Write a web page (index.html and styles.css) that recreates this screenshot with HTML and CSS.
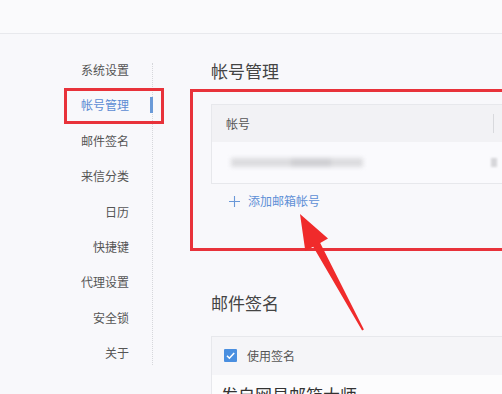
FILE: index.html
```html
<!DOCTYPE html>
<html lang="zh-CN">
<head>
    <meta charset="UTF-8">
    <meta name="viewport" content="width=device-width, initial-scale=1.0">
    <title>设置</title>
    <link rel="stylesheet" href="styles.css">
</head>
<body>

<div class="topbar"></div>

<div class="page">
    <div class="side">
        <ul class="nav">
            <li>系统设置</li>
            <li class="active">帐号管理</li>
            <li>邮件签名</li>
            <li>来信分类</li>
            <li>日历</li>
            <li>快捷键</li>
            <li>代理设置</li>
            <li>安全锁</li>
            <li>关于</li>
        </ul>
    </div>

    <div class="main">
        <h2>帐号管理</h2>
        <div class="acc-table">
            <div class="acc-head">
                <span>帐号</span>
                <i class="col-sep"></i>
            </div>
            <div class="acc-row">
                <span class="blur-mail"><b class="b1"></b><b class="b2"></b><b class="b3"></b></span>
                <span class="blur-col"></span>
            </div>
        </div>
        <a class="add-link" href="#">
            <svg class="plus" width="11" height="11" viewBox="0 0 11 11"><path d="M5.5 0v11M0 5.5h11" stroke="#6a98d8" stroke-width="1.1"/></svg>添加邮箱帐号</a>

        <h2 class="sig-title">邮件签名</h2>
        <div class="sig-box">
            <div class="sig-head">
                <span class="check"><svg width="13" height="13" viewBox="0 0 13 13"><path d="M3 6.8l2.4 2.4L10.2 4" fill="none" stroke="#fff" stroke-width="1.6"/></svg></span>
                <span>使用签名</span>
            </div>
            <div class="sig-text">发自网易邮箱大师</div>
        </div>
    </div>
</div>

<!-- 标注 -->
<div class="mark mark-nav"></div>
<div class="mark mark-acc"></div>
<svg class="arrow" width="502" height="394" viewBox="0 0 502 394">
    <polygon points="300,214 328,238.6 320.2,243 363.9,329.5 362.1,330.5 313.2,246.7 305.3,251" fill="#f02b2b"/>
</svg>

</body>
</html>
```

FILE: styles.css
```css
* {
    box-sizing: border-box;
}
body {
    margin: 0;
    height: 394px;
    overflow: hidden;
    font-family: "Noto Sans CJK SC", "Noto Sans", sans-serif;
    background-color: #f8f8fb;
    color: #555;
    position: relative;
}
.topbar {
    height: 34px;
    background-color: #fafafc;
    border-bottom: 1px solid #e8e9ed;
}
.page {
    display: flex;
}
.side {
    width: 153px;
    flex-shrink: 0;
    padding-top: 29px;
}
.nav {
    list-style: none;
    margin: 0;
    padding: 0 0 5px 0;
    border-right: 1px dotted #d6d7db;
    display: flex;
    flex-direction: column;
    gap: 21.4px;
}
.nav li {
    position: relative;
    font-size: 12px;
    line-height: 14px;
    text-align: right;
    padding-right: 23px;
    color: #555;
}
.nav li.active {
    color: #5b8bd3;
}
.nav li.active::after {
    content: "";
    position: absolute;
    right: -1px;
    top: -1px;
    width: 3px;
    height: 16px;
    background-color: #6a9ad8;
}
.main {
    padding: 25px 0 0 58px;
    flex: 1;
    min-width: 0;
}
h2 {
    margin: 0;
    font-size: 17px;
    line-height: 24px;
    font-weight: normal;
    color: #444;
}
.acc-table {
    margin-top: 21px;
    width: 320px;
    border: 1px solid #e7e8ec;
    background-color: #fafafd;
}
.acc-head {
    height: 37px;
    background-color: #f2f2f5;
    display: flex;
    align-items: center;
    padding-left: 14px;
    font-size: 12px;
    color: #555;
}
.col-sep {
    margin-left: auto;
    margin-right: 36px;
    width: 1px;
    height: 19px;
    background-color: #d8d9dd;
}
.acc-row {
    height: 41px;
    display: flex;
    align-items: center;
    padding-left: 19px;
}
.blur-mail {
    display: flex;
    filter: blur(2px);
}
.blur-mail b {
    height: 9px;
    background-color: #dcdcdf;
}
.blur-mail .b1 { width: 60px; }
.blur-mail .b2 { width: 40px; background-color: #cfcfd3; }
.blur-mail .b3 { width: 32px; }
.blur-col {
    margin-left: auto;
    margin-right: 33px;
    width: 6px;
    height: 9px;
    background-color: #d6d6da;
    filter: blur(1px);
}
.add-link {
    display: inline-flex;
    align-items: center;
    margin-top: 10px;
    margin-left: 18px;
    font-size: 12px;
    line-height: 14px;
    color: #5e8fd6;
    text-decoration: none;
}
.plus {
    margin-right: 8px;
}
.sig-title {
    margin-top: 79px;
}
.sig-box {
    margin-top: 21px;
    width: 320px;
    border: 1px solid #e7e8ec;
    background-color: #fcfcfd;
}
.sig-head {
    height: 38px;
    display: flex;
    align-items: center;
    padding-left: 12px;
    font-size: 12px;
    color: #555;
    background-color: #f5f5f8;
}
.check {
    width: 13px;
    height: 13px;
    background-color: #4a8fe0;
    border-radius: 1px;
    margin-right: 10px;
    display: flex;
}
.sig-text {
    padding: 8px 0 0 9px;
    font-size: 17px;
    line-height: 24px;
    color: #333;
}
.mark {
    position: absolute;
    border: 3px solid #e8323a;
}
.mark-nav {
    left: 64px;
    top: 88px;
    width: 100px;
    height: 36px;
}
.mark-acc {
    left: 190px;
    top: 89px;
    width: 330px;
    height: 162px;
}
.arrow {
    position: absolute;
    left: 0;
    top: 0;
}
```
